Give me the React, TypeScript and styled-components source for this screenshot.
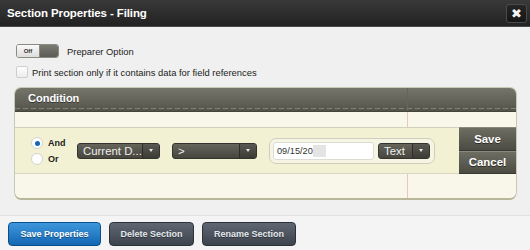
import styled, { createGlobalStyle } from "styled-components";

const Global = createGlobalStyle`
    html, body { margin: 0; padding: 0; background: #efefef; }
    body { font-family: "Liberation Sans", Arial, sans-serif; }
`;

const Dialog = styled.div`
    width: 530px;
    height: 250px;
    display: flex;
    flex-direction: column;
    background: #f0f0f0;
    overflow: hidden;
`;

const Header = styled.div`
    height: 27px;
    box-sizing: border-box;
    display: flex;
    align-items: center;
    justify-content: space-between;
    padding: 0 3px 1px 7px;
    background: linear-gradient(#393939, #222222);
    border-bottom: 1px solid #4a4a4a;
`;

const Title = styled.div`
    color: #fff;
    font-weight: bold;
    font-size: 11.5px;
    letter-spacing: -0.1px;
`;

const CloseButton = styled.div`
    width: 21px;
    height: 19px;
    box-sizing: border-box;
    border: 1px solid #4a4a4a;
    border-radius: 3px;
    background: linear-gradient(#262626, #151515);
    color: #f4f4f4;
    font-size: 13px;
    display: flex;
    align-items: center;
    justify-content: center;
    margin-top: 1px;
`;

const Main = styled.div`
    flex: 1;
    padding: 17px 14px 0 15px;
    color: #222;
    font-size: 9.4px;
`;

const OptionRow = styled.div<{ gap: number; top: number }>`
    display: flex;
    align-items: center;
    gap: ${p => p.gap}px;
    margin-top: ${p => p.top}px;
    padding-left: 1px;
`;

const Toggle = styled.div`
    width: 43px;
    height: 14px;
    box-sizing: border-box;
    display: flex;
    border: 1px solid #8a8a82;
    border-radius: 3px;
    overflow: hidden;
`;

const ToggleOff = styled.div`
    width: 22px;
    background: linear-gradient(#fafafa, #dcdcdc);
    border-right: 1px solid #8a8a82;
    font-size: 6px;
    font-weight: bold;
    color: #333;
    display: flex;
    align-items: center;
    justify-content: center;
`;

const ToggleKnob = styled.div`
    flex: 1;
    background: linear-gradient(#7a7a72, #5c5c55);
`;

const CheckBox = styled.div`
    width: 12px;
    height: 12px;
    box-sizing: border-box;
    border: 1px solid #cfcfcf;
    border-radius: 2px;
    background: linear-gradient(#ffffff, #ececec);
`;

const Panel = styled.div`
    margin-top: 10px;
    border-radius: 6px;
    overflow: hidden;
    box-shadow: 0 2px 0 #b8b79a, 0 0 0 1px #c9c8b4;
`;

const PanelHeader = styled.div`
    height: 24px;
    box-sizing: border-box;
    padding: 0 13px 3px;
    display: flex;
    align-items: center;
    color: #fff;
    font-weight: bold;
    font-size: 11px;
    background:
        repeating-linear-gradient(90deg, #85847a 0 5px, transparent 5px 8px) left bottom 2px / 100% 1px no-repeat,
        linear-gradient(90deg, transparent 392px, #66655c 392px, #66655c 393px, transparent 393px),
        linear-gradient(#76756a, #55544b);
    border-bottom: 1px solid #45443d;
    text-shadow: 0 1px 0 #333;
`;

const Paper = styled.div<{ h: number }>`
    height: ${p => p.h}px;
    background:
        linear-gradient(90deg, transparent 392px, #ecc4c0 392px, #ecc4c0 393px, transparent 393px),
        #f8f7ea;
`;

const ConditionRow = styled.div`
    height: 47px;
    box-sizing: border-box;
    display: flex;
    align-items: center;
    background: #f2f1d3;
    border-top: 1px solid #d2d1bd;
    border-bottom: 1px solid #d8d7c0;
    padding-left: 16px;
`;

const RadioGroup = styled.div`
    display: flex;
    flex-direction: column;
    gap: 4px;
    margin-top: 1px;
    width: 46px;
`;

const RadioItem = styled.div`
    display: flex;
    align-items: center;
    gap: 5px;
    font-weight: bold;
    font-size: 9px;
    color: #222;
`;

const Radio = styled.div<{ checked?: boolean }>`
    width: 12px;
    height: 12px;
    box-sizing: border-box;
    border-radius: 50%;
    border: 1px solid #d4d4d4;
    background: #fff;
    display: flex;
    align-items: center;
    justify-content: center;
    &::after {
        content: "";
        width: 5px;
        height: 5px;
        border-radius: 50%;
        background: ${p => (p.checked ? "#1466b8" : "transparent")};
    }
`;

const Select = styled.div<{ w: number; ml: number }>`
    width: ${p => p.w}px;
    height: 16px;
    margin-left: ${p => p.ml}px;
    box-sizing: border-box;
    display: flex;
    border: 1px solid #34332e;
    border-radius: 3px;
    background: linear-gradient(#66655c, #46453e);
    color: #eee;
    font-size: 11.4px;
    overflow: hidden;
`;

const SelectLabel = styled.div`
    flex: 1;
    padding-left: 5px;
    line-height: 14px;
    white-space: nowrap;
`;

const SelectArrow = styled.div`
    width: 16px;
    border-left: 1px solid #2e2d29;
    background: linear-gradient(#5a5951, #3c3b35);
    display: flex;
    align-items: center;
    justify-content: center;
    &::after {
        content: "";
        border-left: 2.5px solid transparent;
        border-right: 2.5px solid transparent;
        border-top: 3px solid #e8e8e8;
    }
`;

const InputGroup = styled.div`
    margin-left: 12px;
    width: 166px;
    height: 26px;
    box-sizing: border-box;
    display: flex;
    align-items: center;
    gap: 4px;
    padding: 0 4px 0 3px;
    border: 1px solid #cfcebc;
    border-radius: 7px;
    background: #f6f5e4;
`;

const DateInput = styled.div`
    width: 101px;
    height: 18px;
    box-sizing: border-box;
    border: 1px solid #dcdcd4;
    border-radius: 3px;
    background: #fff;
    display: flex;
    align-items: center;
    padding-left: 3px;
    font-size: 9.2px;
    color: #333;
`;

const Highlight = styled.span`
    display: inline-block;
    width: 13px;
    height: 12px;
    background: #e4e4e4;
`;

const SideButtons = styled.div`
    margin-left: auto;
    align-self: stretch;
    width: 57px;
    display: flex;
    flex-direction: column;
    margin-top: -1px;
    margin-bottom: -1px;
`;

const SideButton = styled.div`
    flex: 1;
    display: flex;
    align-items: center;
    justify-content: center;
    color: #fff;
    font-weight: bold;
    font-size: 11.4px;
    text-shadow: 0 1px 0 #2a2a26;
    background: linear-gradient(#6e6d62, #4c4b43);
    border-top: 1px solid #8a897d;
    border-bottom: 1px solid #3a3934;
`;

const Footer = styled.div`
    height: 35px;
    box-sizing: border-box;
    border-top: 1px solid #e2e2e2;
    background: #f4f4f4;
    display: flex;
    gap: 8px;
    padding: 6px 0 0 8px;
`;

const FooterButton = styled.div<{ primary?: boolean; w: number }>`
    width: ${p => p.w}px;
    height: 24px;
    box-sizing: border-box;
    border-radius: 4px;
    border: 1px solid ${p => (p.primary ? "#0b4e8c" : "#2c323a")};
    background: ${p =>
        p.primary
            ? "linear-gradient(#3d97dc, #1466b3)"
            : "linear-gradient(#5f6772, #3c434d)"};
    color: ${p => (p.primary ? "#fff" : "#e4e8ec")};
    font-weight: bold;
    font-size: 9px;
    display: flex;
    align-items: center;
    justify-content: center;
    text-shadow: 0 1px 0 rgba(0, 0, 0, 0.4);
`;

export default function App() {
    return (
        <>
            <Global />
            <Dialog>
                <Header>
                    <Title>Section Properties - Filing</Title>
                    <CloseButton>✖</CloseButton>
                </Header>

                <Main>
                    <OptionRow gap={8} top={0}>
                        <Toggle>
                            <ToggleOff>Off</ToggleOff>
                            <ToggleKnob />
                        </Toggle>
                        Preparer Option
                    </OptionRow>
                    <OptionRow gap={4} top={8}>
                        <CheckBox />
                        Print section only if it contains data for field references
                    </OptionRow>

                    <Panel>
                        <PanelHeader>Condition</PanelHeader>
                        <Paper h={15} />
                        <ConditionRow>
                            <RadioGroup>
                                <RadioItem><Radio checked />And</RadioItem>
                                <RadioItem><Radio />Or</RadioItem>
                            </RadioGroup>
                            <Select w={83} ml={0}>
                                <SelectLabel>Current D...</SelectLabel>
                                <SelectArrow />
                            </Select>
                            <Select w={85} ml={12}>
                                <SelectLabel>&gt;</SelectLabel>
                                <SelectArrow />
                            </Select>
                            <InputGroup>
                                <DateInput>09/15/20<Highlight /></DateInput>
                                <Select w={52} ml={0}>
                                    <SelectLabel>Text</SelectLabel>
                                    <SelectArrow />
                                </Select>
                            </InputGroup>
                            <SideButtons>
                                <SideButton>Save</SideButton>
                                <SideButton>Cancel</SideButton>
                            </SideButtons>
                        </ConditionRow>
                        <Paper h={24} />
                    </Panel>
                </Main>

                <Footer>
                    <FooterButton primary w={93}>Save Properties</FooterButton>
                    <FooterButton w={85}>Delete Section</FooterButton>
                    <FooterButton w={94}>Rename Section</FooterButton>
                </Footer>
            </Dialog>
        </>
    );
}
